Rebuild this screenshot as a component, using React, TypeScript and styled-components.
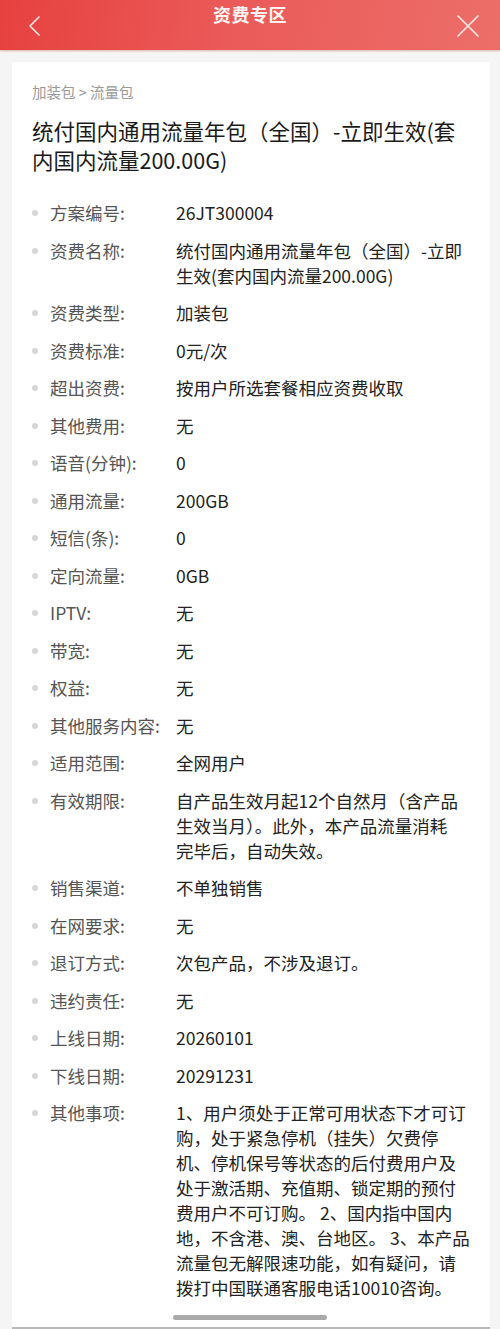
import React from "react";
import styled, { createGlobalStyle } from "styled-components";

const GlobalStyle = createGlobalStyle`
  html, body {
    margin: 0;
    padding: 0;
    background: #f5f5f5;
  }
  body {
    font-family: "Noto Sans CJK SC", "Noto Sans", "Liberation Sans", sans-serif;
    -webkit-font-smoothing: antialiased;
  }
`;

const Screen = styled.div`
  position: relative;
  width: 500px;
  height: 1329px;
  overflow: hidden;
  background: #f5f5f5;
  display: flex;
  flex-direction: column;
`;

const Header = styled.header`
  position: relative;
  height: 50px;
  flex-shrink: 0;
  background: linear-gradient(100deg, #e6413f 0%, #ea5a58 45%, #ec6e69 100%);
  box-shadow: 0 1px 2px rgba(180, 40, 40, 0.35);
  display: flex;
  align-items: flex-start;
  justify-content: space-between;
  padding: 0 18px 0 20px;
  box-sizing: border-box;
`;

const Title = styled.h1`
  position: absolute;
  left: 0;
  right: 0;
  top: 3px;
  margin: 0;
  text-align: center;
  font-size: 18px;
  line-height: 22px;
  font-weight: 700;
  color: #fff5f3;
  letter-spacing: 0.5px;
`;

const IconButton = styled.button`
  border: 0;
  background: none;
  padding: 0;
  margin-top: 12px;
  width: 28px;
  height: 28px;
  display: flex;
  align-items: center;
  justify-content: center;
  color: #fbe9e6;
`;

const Body = styled.main`
  flex: 1;
  padding: 12px 10px 0 12px;
  display: flex;
  flex-direction: column;
`;

const Card = styled.section`
  flex: 1;
  background: #fff;
  border-radius: 2px 2px 0 0;
  padding: 20px 12px 0 20px;
  border-bottom: 2px solid #b9b9b9;
`;

const Crumb = styled.div`
  font-size: 14.5px;
  line-height: 20px;
  color: #9a9a9a;
`;

const PlanTitle = styled.h2`
  margin: 14px 0 0;
  font-size: 21.5px;
  line-height: 29px;
  font-weight: 400;
  color: #1a1a1a;
  padding-right: 14px;
`;

const List = styled.ul`
  list-style: none;
  margin: 26px 0 0;
  padding: 0;
  display: flex;
  flex-direction: column;
  gap: 12.5px;
`;

const Row = styled.li`
  display: grid;
  grid-template-columns: 18px 126px 1fr;
  font-size: 17.5px;
  line-height: 25px;
`;

const Dot = styled.span`
  width: 6px;
  height: 6px;
  border-radius: 50%;
  background: #d6d6d6;
  margin-top: 10px;
`;

const Label = styled.span`
  color: #555;
  white-space: nowrap;
`;

const Value = styled.div`
  color: #222;
  display: flex;
  flex-direction: column;
`;

const Line = styled.span`
  white-space: nowrap;
`;

const ScrollThumb = styled.div`
  position: absolute;
  left: 173px;
  bottom: 9px;
  width: 154px;
  height: 5px;
  border-radius: 3px;
  background: #a9a9a9;
`;

const rows: [string, string[]][] = [
  ["方案编号:", ["26JT300004"]],
  ["资费名称:", ["统付国内通用流量年包（全国）-立即", "生效(套内国内流量200.00G)"]],
  ["资费类型:", ["加装包"]],
  ["资费标准:", ["0元/次"]],
  ["超出资费:", ["按用户所选套餐相应资费收取"]],
  ["其他费用:", ["无"]],
  ["语音(分钟):", ["0"]],
  ["通用流量:", ["200GB"]],
  ["短信(条):", ["0"]],
  ["定向流量:", ["0GB"]],
  ["IPTV:", ["无"]],
  ["带宽:", ["无"]],
  ["权益:", ["无"]],
  ["其他服务内容:", ["无"]],
  ["适用范围:", ["全网用户"]],
  ["有效期限:", ["自产品生效月起12个自然月（含产品", "生效当月）。此外，本产品流量消耗", "完毕后，自动失效。"]],
  ["销售渠道:", ["不单独销售"]],
  ["在网要求:", ["无"]],
  ["退订方式:", ["次包产品，不涉及退订。"]],
  ["违约责任:", ["无"]],
  ["上线日期:", ["20260101"]],
  ["下线日期:", ["20291231"]],
  [
    "其他事项:",
    [
      "1、用户须处于正常可用状态下才可订",
      "购，处于紧急停机（挂失）欠费停",
      "机、停机保号等状态的后付费用户及",
      "处于激活期、充值期、锁定期的预付",
      "费用户不可订购。 2、国内指中国内",
      "地，不含港、澳、台地区。 3、本产品",
      "流量包无解限速功能，如有疑问，请",
      "拨打中国联通客服电话10010咨询。",
    ],
  ],
];

export default function App() {
  return (
    <>
      <GlobalStyle />
      <Screen>
        <Header>
          <IconButton aria-label="返回">
            <svg width="14" height="22" viewBox="0 0 14 22" fill="none">
              <path d="M12 2 L3 11 L12 20" stroke="currentColor" strokeWidth="1.6" strokeLinecap="round" strokeLinejoin="round" />
            </svg>
          </IconButton>
          <Title>资费专区</Title>
          <IconButton aria-label="关闭">
            <svg width="24" height="24" viewBox="0 0 24 24" fill="none">
              <path d="M2 2 L22 22 M22 2 L2 22" stroke="currentColor" strokeWidth="1.7" strokeLinecap="round" />
            </svg>
          </IconButton>
        </Header>
        <Body>
          <Card>
            <Crumb>加装包 &gt; 流量包</Crumb>
            <PlanTitle>统付国内通用流量年包（全国）-立即生效(套内国内流量200.00G)</PlanTitle>
            <List>
              {rows.map(([label, lines]) => (
                <Row key={label}>
                  <Dot />
                  <Label>{label}</Label>
                  <Value>
                    {lines.map((line) => (
                      <Line key={line}>{line}</Line>
                    ))}
                  </Value>
                </Row>
              ))}
            </List>
          </Card>
        </Body>
        <ScrollThumb />
      </Screen>
    </>
  );
}
